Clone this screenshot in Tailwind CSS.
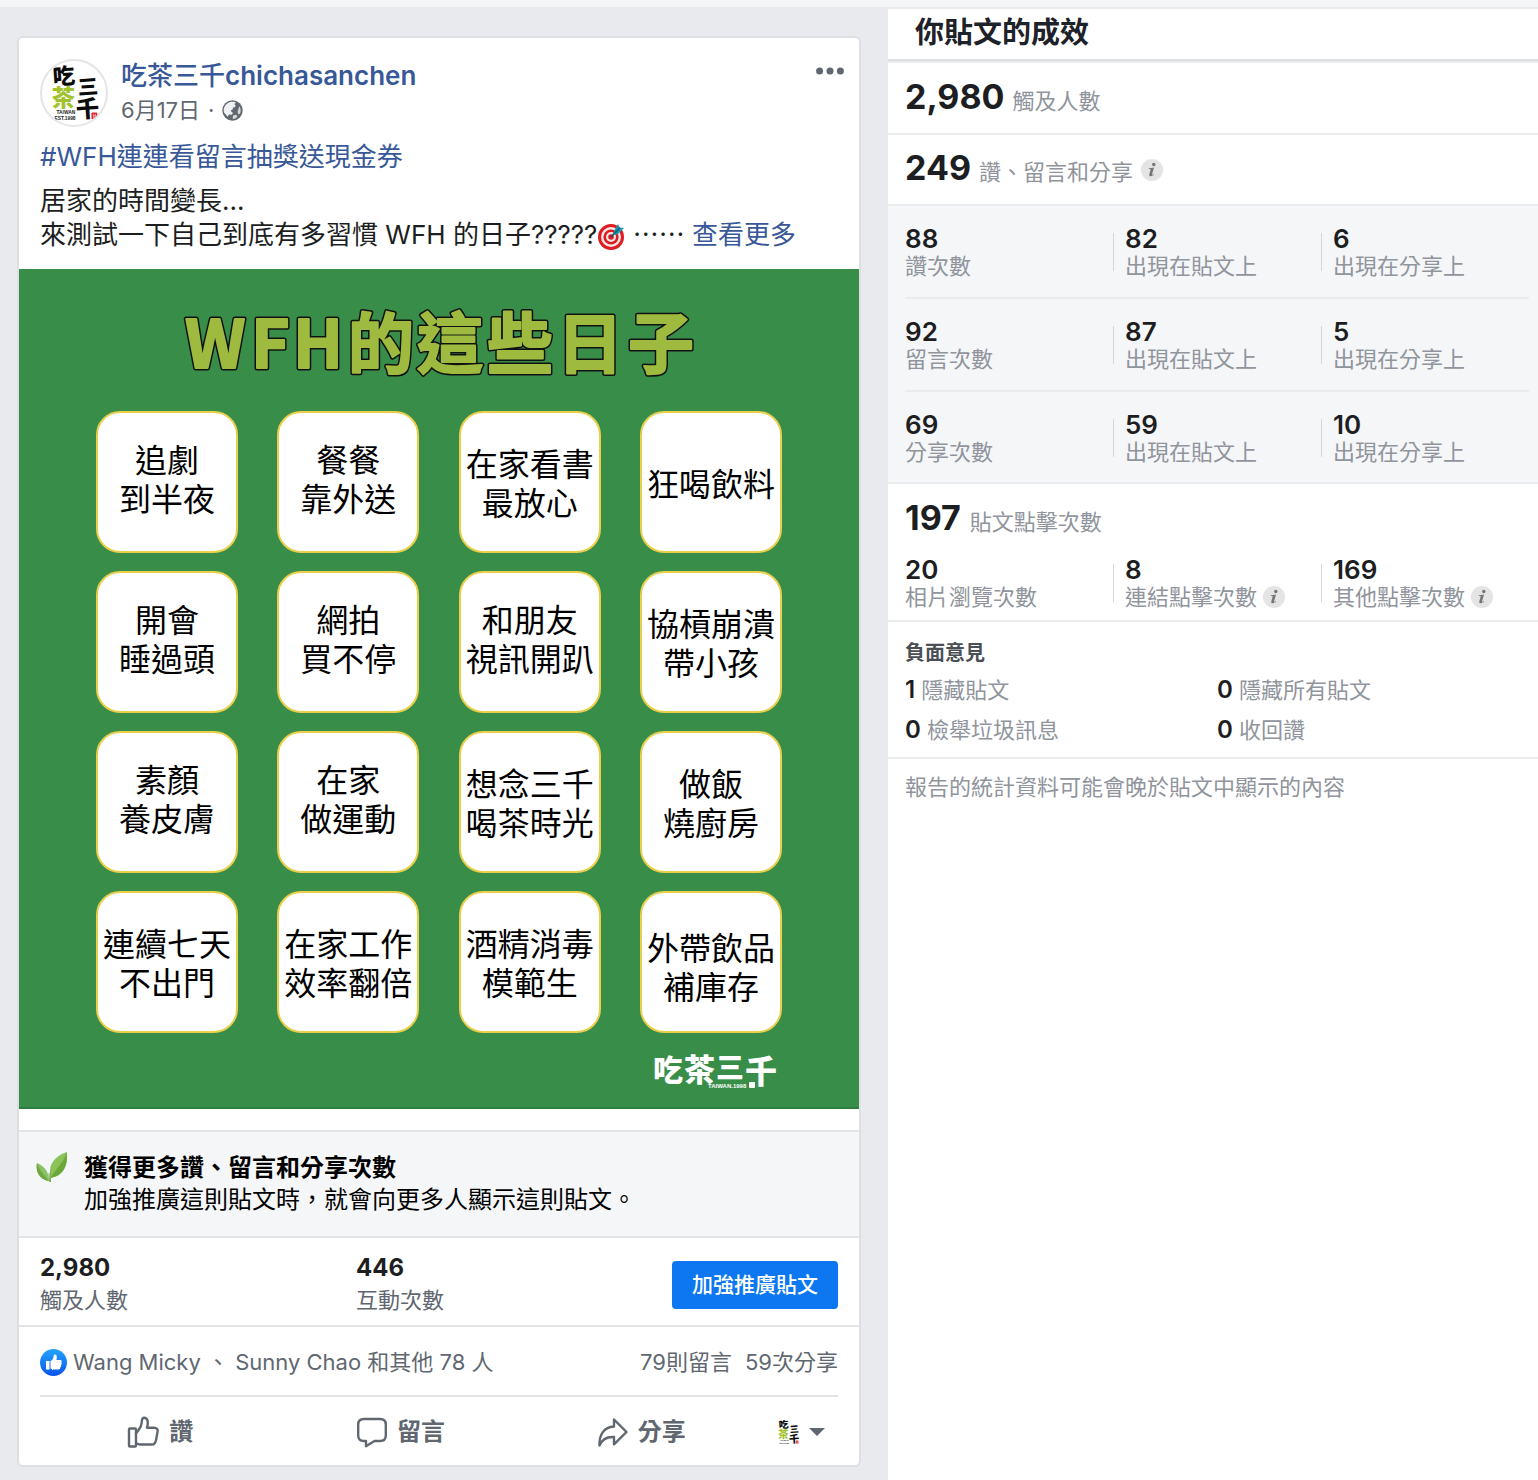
<!DOCTYPE html>
<html lang="zh-Hant">
<head>
<meta charset="utf-8">
<meta name="viewport" content="width=device-width, initial-scale=1">
<title>你貼文的成效</title>
<script src="https://cdn.jsdelivr.net/npm/@tailwindcss/browser@4"></script>
</head>
<body class="flex min-h-screen flex-col bg-white font-['Inter','Noto_Sans_CJK_TC',sans-serif] text-[#1c1e21]">

<svg class="hidden" aria-hidden="true">
  <defs>
    <symbol id="brand" viewBox="0 0 68 68">
      <g font-family="'Noto Sans CJK TC', sans-serif" font-weight="900">
        <text x="12" y="25" font-size="23" fill="#0b0b0b" transform="rotate(-4 24 16)">吃</text>
        <text x="11" y="47" font-size="24" fill="#a2c22e">茶</text>
        <text x="38" y="35" font-size="21" fill="#0b0b0b" transform="rotate(-4 48 28)">三</text>
        <text x="36" y="59" font-size="24" fill="#0b0b0b" transform="rotate(-4 48 50)">千</text>
      </g>
      <g font-family="'Liberation Sans', sans-serif" font-weight="700" font-size="5" fill="#222">
        <text x="16" y="56">TAIWAN</text>
        <text x="14" y="62">EST.1998</text>
      </g>
      <rect x="52" y="54" width="6" height="7" rx="1" fill="#e0202c"/>
      <path d="M54 55.500v4M56 55.500v4M54 57.500h2" stroke="#fff" stroke-width=".6"/>
    </symbol>
    <symbol id="info" viewBox="0 0 22 22">
      <circle cx="11" cy="11" r="11" fill="#e4e4e4"/>
      <circle cx="12.800" cy="5.500" r="1.700" fill="#757575"/>
      <path d="M7.800 9.200c1.700-.2 3.300-.5 5.200-.8l-2 7c-.2.800.3.700 1.600-.4l.4.500c-1.700 2-5.400 2.600-4.700 0l1.300-4.700c.1-.6-.6-.7-1.800-.7z" fill="#757575"/>
    </symbol>
  </defs>
</svg>

<div class="h-[9px] border-b-2 border-[#e9e9ec] bg-[#f5f6f7]"></div>

<div class="grid flex-1 grid-cols-[888fr_650fr]">
  <main class="bg-[#e9eaee] pt-[27px] pr-[27px] pb-3 pl-[17px]">
    <article class="rounded-md border-2 border-[#dddfe2] bg-white">
      <header class="flex px-[21px] pt-[21px]">
        <svg class="size-[68px] shrink-0 rounded-full border-2 border-[#e5e5e5]" viewBox="1 1 66 66" role="img" aria-label="吃茶三千"><use href="#brand" width="68" height="68"/></svg>
        <div class="ml-[13px] flex-1">
          <a href="#" class="block text-[26px] leading-[34px] font-semibold text-[#385898]"><span class="font-medium">吃茶三千</span>chichasanchen</a>
          <div class="flex items-center text-[22px] leading-[34px] text-[#606770]">
            <a href="#">6月17日</a><span class="px-2">·</span>
            <svg class="size-[21px]" viewBox="0 0 21 21" role="img" aria-label="公開">
              <circle cx="10.500" cy="10.500" r="10.200" fill="#606770"/>
              <path d="M2 12.500C.8 8 3.500 3.500 8 2c2-.5 5-.4 6 .6l-1.600 1.500 1.300 1.700-1.200 1.600-1.800.2.300 1.700-2.200.9.800 1.800c1.900.6 1.300 2.300-.2 2.700l-2.400-.3-1.300 2.300z" fill="#fff" fill-opacity=".9"/>
              <path d="M17.500 6c1.300 2.500 1.600 5 .6 7.500l-1.600 1-1-2.500.8-2.500zM11 15.500l3-.8 1.500 1.600-1.800 2.200-3 .4z" fill="#fff" fill-opacity=".75"/>
            </svg>
          </div>
        </div>
        <button type="button" aria-label="更多選項" class="mt-2 -mr-[6px] self-start">
          <svg class="h-2 w-7" viewBox="0 0 28 8" fill="#606770"><circle cx="3.600" cy="4" r="3.500"/><circle cx="14" cy="4" r="3.500"/><circle cx="24.400" cy="4" r="3.500"/></svg>
        </button>
      </header>

      <div class="px-[21px] pt-[13px] pb-[17px] text-[26px] leading-[34px]">
        <p class="mb-[10px]"><a href="#" class="text-[#385898]">#WFH連連看留言抽獎送現金券</a></p>
        <p>居家的時間變長...<br>來測試一下自己到底有多習慣 WFH 的日子?????<svg class="inline size-7 align-middle" viewBox="0 0 28 28" role="img" aria-label="靶心">
            <circle cx="14" cy="14" r="13" fill="#e01b22"/><circle cx="14" cy="14" r="10" fill="#f4e9e6"/><circle cx="14" cy="14" r="7.600" fill="#e01b22"/><circle cx="14" cy="14" r="5" fill="#f4e9e6"/><circle cx="14" cy="14" r="2.800" fill="#e01b22"/>
            <path d="M14 14l7-8" stroke="#174a63" stroke-width="1.800"/><path d="M17 8l4-7 1.500 3.500L27 5l-6 6-4.500 1z" fill="#1698ae"/><path d="M17.500 10.500L22.500 5" stroke="#0b5f79" stroke-width="1.500"/>
          </svg> <span class="font-['Noto_Sans_CJK_TC',sans-serif] leading-none">……</span> <a href="#" class="text-[#385898]">查看更多</a></p>
      </div>

      <figure class="flex aspect-square flex-col border-b-2 border-[#2e8040] bg-[#388d49] font-['Noto_Sans_CJK_TC',sans-serif] text-black">
        <svg class="h-[142px] w-full" viewBox="0 0 840 142" role="img" aria-label="WFH的這些日子">
          <use href="#headline" stroke="#111" stroke-width="5"/>
          <g stroke="#9ebb40" fill="#9ebb40" stroke-width="2">
            <text id="headline" y="99" font-size="66" font-weight="700" stroke-linejoin="round"><tspan x="166">W</tspan><tspan x="232">F</tspan><tspan x="274">H</tspan><tspan x="329">的</tspan><tspan x="398">這</tspan><tspan x="468">些</tspan><tspan x="538">日</tspan><tspan x="609">子</tspan></text>
          </g>
        </svg>
        <div class="grid grid-cols-[repeat(4,142px)] justify-between gap-y-[18px] px-[77px] text-center text-[32px] leading-[39px] whitespace-nowrap *:flex *:h-[142px] *:items-center *:justify-center *:rounded-3xl *:border-2 *:border-[#ebcf4b] *:bg-white">
          <div class="pb-2">追劇<br>到半夜</div>
          <div class="pb-2">餐餐<br>靠外送</div>
          <div>在家看書<br>最放心</div>
          <div>狂喝飲料</div>
          <div class="pb-2">開會<br>睡過頭</div>
          <div class="pb-2">網拍<br>買不停</div>
          <div class="pb-2">和朋友<br>視訊開趴</div>
          <div>協槓崩潰<br>帶小孩</div>
          <div class="pb-2">素顏<br>養皮膚</div>
          <div class="pb-2">在家<br>做運動</div>
          <div>想念三千<br>喝茶時光</div>
          <div>做飯<br>燒廚房</div>
          <div>連續七天<br>不出門</div>
          <div>在家工作<br>效率翻倍</div>
          <div>酒精消毒<br>模範生</div>
          <div class="pt-2">外帶飲品<br>補庫存</div>
        </div>
        <svg class="mt-5 mr-[82px] h-10 w-[124px] self-end overflow-visible" viewBox="0 0 124 40" role="img" aria-label="吃茶三千 TAIWAN.1998" fill="#fff" font-family="'Noto Sans CJK TC', sans-serif" font-weight="900">
          <text x="0" y="28" font-size="30">吃</text><text x="31" y="28" font-size="31">茶</text><text x="63" y="25" font-size="28">三</text><text x="92" y="30" font-size="32">千</text>
          <text x="55" y="35" font-size="6" font-family="'Liberation Sans', sans-serif" font-weight="700">TAIWAN.1998</text>
          <rect x="96" y="29" width="6" height="6" rx="1"/>
        </svg>
      </figure>

      <section class="mt-[21px] flex border-y-2 border-[#e3e4e6] bg-[#f5f6f7] pt-5 pr-5 pb-5 pl-[17px] text-2xl leading-8 text-black">
        <svg class="mr-[17px] size-[31px] shrink-0" viewBox="0 0 31 31" aria-hidden="true">
          <path d="M1 11c7 3 12 8 12 18C5 28-1 21 1 11z" fill="#8bc268"/><path d="M1 11c2 7 8 13 12 18C5 28-1 21 1 11z" fill="#6da93c"/>
          <path d="M31 0c-9 3-17 9-17 19 0 3 0 6 .3 7C28 24 32 13 31 0z" fill="#8bc35a"/><path d="M31 0C28 10 19 18 14.300 26 28 24 32 13 31 0z" fill="#6ba73a"/><path d="M13 21l.5 9M14.500 19v11" stroke="#79b050" stroke-width="1"/>
        </svg>
        <div><h2 class="font-bold">獲得更多讚、留言和分享次數</h2><p>加強推廣這則貼文時，就會向更多人顯示這則貼文。</p></div>
      </section>

      <section class="flex items-center justify-between border-b-2 border-[#e3e4e6] px-[21px] pt-[14px] pb-[9px] text-[22px] leading-8 text-[#606770]">
        <div class="flex-1"><strong class="block text-2xl leading-8 font-bold text-[#1c1e21]">2,980</strong>觸及人數</div>
        <div class="flex-1"><strong class="block text-2xl leading-8 font-bold text-[#1c1e21]">446</strong>互動次數</div>
        <button type="button" class="mt-[2px] h-12 rounded bg-[#0c77f0] px-5 text-[21px] font-medium text-white">加強推廣貼文</button>
      </section>

      <div class="mx-[21px] flex h-[70px] items-center border-b-2 border-[#e3e4e6] pt-[2px] text-[22px] leading-8 text-[#606770]">
        <svg class="mr-[6px] size-[27px]" viewBox="0 0 27 27" role="img" aria-label="讚">
          <defs><linearGradient id="blue" x2="0" y2="1"><stop stop-color="#22a5fb"/><stop offset="1" stop-color="#0c53ee"/></linearGradient></defs>
          <circle cx="13.500" cy="13.500" r="13.500" fill="url(#blue)"/>
          <path d="M6 12h3.500v8.500H6zM10.500 12c2-.8 3-2.600 3.200-5.500.1-1.600 3.200-1.500 3.200 1.500 0 1.300-.3 2.200-.6 3h3.700c2 0 2.200 1.700 1.300 2.600.7 1 .5 1.900-.3 2.500.3 1 0 1.800-.7 2.200.1 1.500-.9 2.200-2.300 2.200h-4c-1.500 0-2.500-.4-3.500-.9z" fill="#fff"/>
        </svg>
        <a href="#" class="flex-1 whitespace-pre">Wang Micky 、 Sunny Chao 和其他 78 人</a>
        <a href="#" class="mr-[13px]">79則留言</a><a href="#">59次分享</a>
      </div>

      <div class="mx-[21px] flex h-[68px] items-center pt-[2px] text-2xl leading-8 font-semibold text-[#606770]">
        <button type="button" class="flex flex-1 items-center justify-center gap-[10px]">
          <svg class="size-8" viewBox="0 0 32 32" fill="none" stroke="#606770" stroke-width="2.400" stroke-linejoin="round" stroke-linecap="round"><rect x="2" y="12.500" width="7" height="18" rx="1"/><path d="M9 17.500c2-3.500 5.500-5 5.700-11 .1-3 .7-4.800 2.500-4.800 3.200 0 4.500 4 2.800 10h7c2.500 0 4.200 1.500 3.500 4.500l-1.500 8c-.7 2.800-1.500 4.300-4 4.300H13c-1.500 0-2.500-1-4-1"/></svg>讚
        </button>
        <button type="button" class="flex flex-1 items-center justify-center gap-[10px]">
          <svg class="h-8 w-[30px]" viewBox="0 0 30 32" fill="none" stroke="#606770" stroke-width="2.400" stroke-linejoin="round"><path d="M7 3h16c4 0 5.800 1.800 5.800 5.500v11c0 3.700-1.800 5.500-5.800 5.500h-5.500l-8.500 5.200V25H7c-4 0-5.800-1.800-5.800-5.500v-11C1.200 4.800 3 3 7 3z"/></svg>留言
        </button>
        <button type="button" class="flex flex-1 items-center justify-center gap-[10px]">
          <svg class="h-8 w-[30px]" viewBox="0 0 30 32" fill="none" stroke="#606770" stroke-width="2.400" stroke-linejoin="round"><path d="M16 3.500l12.500 12.500L16 28.300v-7.300C9 20.500 4 23.500 1.500 29.500 1 19 6 10.800 16 10.500z"/></svg>分享
        </button>
        <button type="button" aria-label="切換身分" class="flex w-[76px] items-center justify-end gap-[6px] pr-[13px]">
          <svg class="h-6 w-7" viewBox="10 6 52 56"><use href="#brand" width="68" height="68"/></svg>
          <svg class="h-2 w-4" viewBox="0 0 16 8"><path d="M0 0h16L8 8z" fill="#606770"/></svg>
        </button>
      </div>
    </article>
  </main>

  <aside class="text-[22px] leading-[28px] text-[#90949c]">
    <h1 class="border-b-2 border-[#dddfe2] pt-1 pb-[6px] pl-[27px] text-[29px] leading-10 font-semibold text-[#1d2129]">你貼文的成效</h1>
    <p class="flex h-[74px] items-baseline gap-2 border-y-2 border-[#e9ebee] pl-[17px] leading-[68px]"><strong class="text-[34px] text-[#1c1e21]">2,980</strong>觸及人數</p>
    <p class="flex h-[71px] items-baseline gap-2 border-b-2 border-[#e9ebee] pl-[17px] leading-[66px]"><strong class="text-[34px] text-[#1c1e21]">249</strong><span>讚、留言和分享</span><svg class="size-[22px] self-center" role="img" aria-label="說明"><use href="#info"/></svg></p>

    <section class="border-b-2 border-[#e9ebee] bg-[#f5f6f7] pr-[9px] pl-[17px]">
      <div class="grid h-[93px] grid-cols-3 border-b-2 border-[#e9ebee] pt-5">
        <div><b class="block text-[26px] leading-[26px] font-semibold text-[#1c1e21]">88</b>讚次數</div>
        <div class="relative pl-3 before:absolute before:top-[7px] before:left-0 before:h-[38px] before:w-px before:bg-[#d4d6da]"><b class="block text-[26px] leading-[26px] font-semibold text-[#1c1e21]">82</b>出現在貼文上</div>
        <div class="relative pl-3 before:absolute before:top-[7px] before:left-0 before:h-[38px] before:w-px before:bg-[#d4d6da]"><b class="block text-[26px] leading-[26px] font-semibold text-[#1c1e21]">6</b>出現在分享上</div>
      </div>
      <div class="grid h-[93px] grid-cols-3 border-b-2 border-[#e9ebee] pt-5">
        <div><b class="block text-[26px] leading-[26px] font-semibold text-[#1c1e21]">92</b>留言次數</div>
        <div class="relative pl-3 before:absolute before:top-[7px] before:left-0 before:h-[38px] before:w-px before:bg-[#d4d6da]"><b class="block text-[26px] leading-[26px] font-semibold text-[#1c1e21]">87</b>出現在貼文上</div>
        <div class="relative pl-3 before:absolute before:top-[7px] before:left-0 before:h-[38px] before:w-px before:bg-[#d4d6da]"><b class="block text-[26px] leading-[26px] font-semibold text-[#1c1e21]">5</b>出現在分享上</div>
      </div>
      <div class="grid h-[90px] grid-cols-3 pt-5">
        <div><b class="block text-[26px] leading-[26px] font-semibold text-[#1c1e21]">69</b>分享次數</div>
        <div class="relative pl-3 before:absolute before:top-[7px] before:left-0 before:h-[38px] before:w-px before:bg-[#d4d6da]"><b class="block text-[26px] leading-[26px] font-semibold text-[#1c1e21]">59</b>出現在貼文上</div>
        <div class="relative pl-3 before:absolute before:top-[7px] before:left-0 before:h-[38px] before:w-px before:bg-[#d4d6da]"><b class="block text-[26px] leading-[26px] font-semibold text-[#1c1e21]">10</b>出現在分享上</div>
      </div>
    </section>

    <section class="border-b-2 border-[#e9ebee] pr-[9px] pl-[17px]">
      <p class="flex h-[67px] items-baseline gap-[9px] leading-[68px]"><strong class="text-[34px] text-[#1c1e21]">197</strong>貼文點擊次數</p>
      <div class="grid h-[69px] grid-cols-3 pt-[6px]">
        <div><b class="block text-[26px] leading-[26px] font-semibold text-[#1c1e21]">20</b>相片瀏覽次數</div>
        <div class="relative pl-3 before:absolute before:top-[7px] before:left-0 before:h-[38px] before:w-px before:bg-[#d4d6da]"><b class="block text-[26px] leading-[26px] font-semibold text-[#1c1e21]">8</b><span class="flex items-center gap-[6px]">連結點擊次數<svg class="size-[22px]" role="img" aria-label="說明"><use href="#info"/></svg></span></div>
        <div class="relative pl-3 before:absolute before:top-[7px] before:left-0 before:h-[38px] before:w-px before:bg-[#d4d6da]"><b class="block text-[26px] leading-[26px] font-semibold text-[#1c1e21]">169</b><span class="flex items-center gap-[6px]">其他點擊次數<svg class="size-[22px]" role="img" aria-label="說明"><use href="#info"/></svg></span></div>
      </div>
    </section>

    <section class="border-b-2 border-[#e9ebee] pt-[14px] pr-[9px] pb-[7px] pl-[17px]">
      <h2 class="text-[20px] leading-[34px] font-semibold text-[#4b4f56]">負面意見</h2>
      <div class="grid grid-cols-2 leading-10">
        <p><b class="text-2xl leading-10 font-semibold text-[#1c1e21]">1</b> 隱藏貼文</p>
        <p><b class="text-2xl leading-10 font-semibold text-[#1c1e21]">0</b> 隱藏所有貼文</p>
        <p><b class="text-2xl leading-10 font-semibold text-[#1c1e21]">0</b> 檢舉垃圾訊息</p>
        <p><b class="text-2xl leading-10 font-semibold text-[#1c1e21]">0</b> 收回讚</p>
      </div>
    </section>
    <p class="pt-[14px] pl-[17px]">報告的統計資料可能會晚於貼文中顯示的內容</p>
  </aside>
</div>
</body>
</html>
